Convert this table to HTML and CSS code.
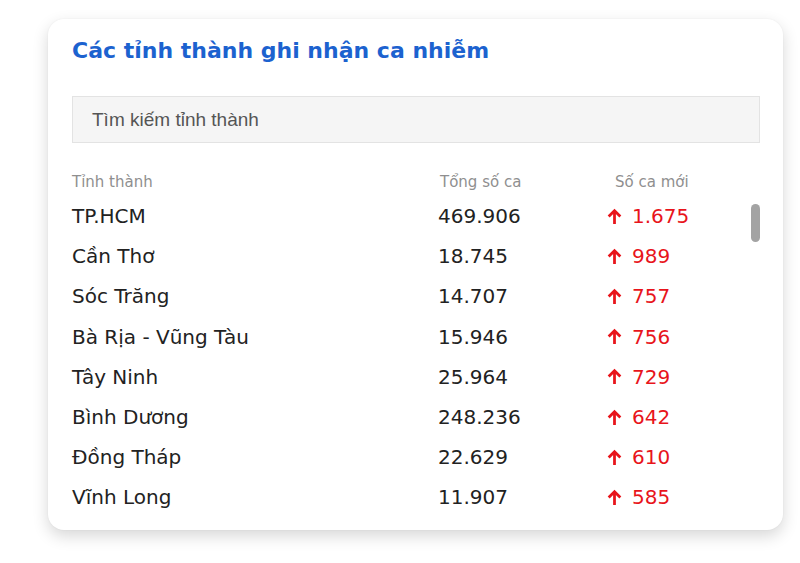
FILE: index.html
```html
<!DOCTYPE html>
<html lang="vi">
<head>
<meta charset="utf-8">
<link rel="stylesheet" href="styles.css">
</head>
<body>
<div class="card">
  <h2 class="title">Các tỉnh thành ghi nhận ca nhiễm</h2>
  <div class="search">Tìm kiếm tỉnh thành</div>
  <div class="table">
    <div class="row head">
      <span class="c1">Tỉnh thành</span>
      <span class="c2">Tổng số ca</span>
      <span class="c3 h3">Số ca mới</span>
    </div>
    <div class="rows">
      <div class="row"><span class="c1">TP.HCM</span><span class="c2">469.906</span><span class="c3 up"><svg viewBox="0 0 14 16"><path d="M7 15V2.5M1.5 8L7 2.5L12.5 8"/></svg>1.675</span></div>
      <div class="row"><span class="c1">Cần Thơ</span><span class="c2">18.745</span><span class="c3 up"><svg viewBox="0 0 14 16"><path d="M7 15V2.5M1.5 8L7 2.5L12.5 8"/></svg>989</span></div>
      <div class="row"><span class="c1">Sóc Trăng</span><span class="c2">14.707</span><span class="c3 up"><svg viewBox="0 0 14 16"><path d="M7 15V2.5M1.5 8L7 2.5L12.5 8"/></svg>757</span></div>
      <div class="row"><span class="c1">Bà Rịa - Vũng Tàu</span><span class="c2">15.946</span><span class="c3 up"><svg viewBox="0 0 14 16"><path d="M7 15V2.5M1.5 8L7 2.5L12.5 8"/></svg>756</span></div>
      <div class="row"><span class="c1">Tây Ninh</span><span class="c2">25.964</span><span class="c3 up"><svg viewBox="0 0 14 16"><path d="M7 15V2.5M1.5 8L7 2.5L12.5 8"/></svg>729</span></div>
      <div class="row"><span class="c1">Bình Dương</span><span class="c2">248.236</span><span class="c3 up"><svg viewBox="0 0 14 16"><path d="M7 15V2.5M1.5 8L7 2.5L12.5 8"/></svg>642</span></div>
      <div class="row"><span class="c1">Đồng Tháp</span><span class="c2">22.629</span><span class="c3 up"><svg viewBox="0 0 14 16"><path d="M7 15V2.5M1.5 8L7 2.5L12.5 8"/></svg>610</span></div>
      <div class="row"><span class="c1">Vĩnh Long</span><span class="c2">11.907</span><span class="c3 up"><svg viewBox="0 0 14 16"><path d="M7 15V2.5M1.5 8L7 2.5L12.5 8"/></svg>585</span></div>
      <div class="thumb"></div>
    </div>
  </div>
</div>
</body>
</html>
```
FILE: styles.css
```css
* { box-sizing: border-box; }
html, body { margin: 0; padding: 0; background: #fff; }
body { padding: 19px 0 33px 48px; font-family: "DejaVu Sans", "Open Sans", sans-serif; }
.card {
  width: 735px;
  height: 511px;
  background: #fff;
  border-radius: 16px;
  box-shadow: 0 6px 16px rgba(0,0,0,0.16), 0 0 2px rgba(0,0,0,0.05);
  padding: 14px 23px 0 24px;
}
.title {
  margin: 0;
  font-size: 22px;
  line-height: 35px;
  font-weight: 700;
  color: #1c62cf;
}
.search {
  margin-top: 28px;
  height: 47px;
  background: #f5f5f5;
  border: 1px solid #e3e3e3;
  padding-left: 19px;
  font-family: "Liberation Sans", Arial, sans-serif;
  font-size: 19px;
  line-height: 45px;
  color: #555;
}
.table { margin-top: 29px; }
.row {
  display: flex;
  align-items: center;
  height: 40.2px;
  font-size: 20px;
  color: #222;
}
.row.head { height: 20px; font-size: 15px; color: #8f8f8f; margin-bottom: 4px; }
.rows { position: relative; }
.c1 { width: 366px; }
.c2 { width: 169px; }
.head .c2 { padding-left: 2px; }
.h3 { padding-left: 8px; }
.up { color: #e8141b; display: flex; align-items: center; }
.up svg {
  width: 15px; height: 17px; margin-right: 10px;
  fill: none; stroke: #e8141b; stroke-width: 2.6; stroke-linecap: butt; stroke-linejoin: miter;
}
.thumb {
  position: absolute;
  left: 679px;
  top: 8px;
  width: 9px;
  height: 38px;
  border-radius: 5px;
  background: #a3a3a3;
}
```
